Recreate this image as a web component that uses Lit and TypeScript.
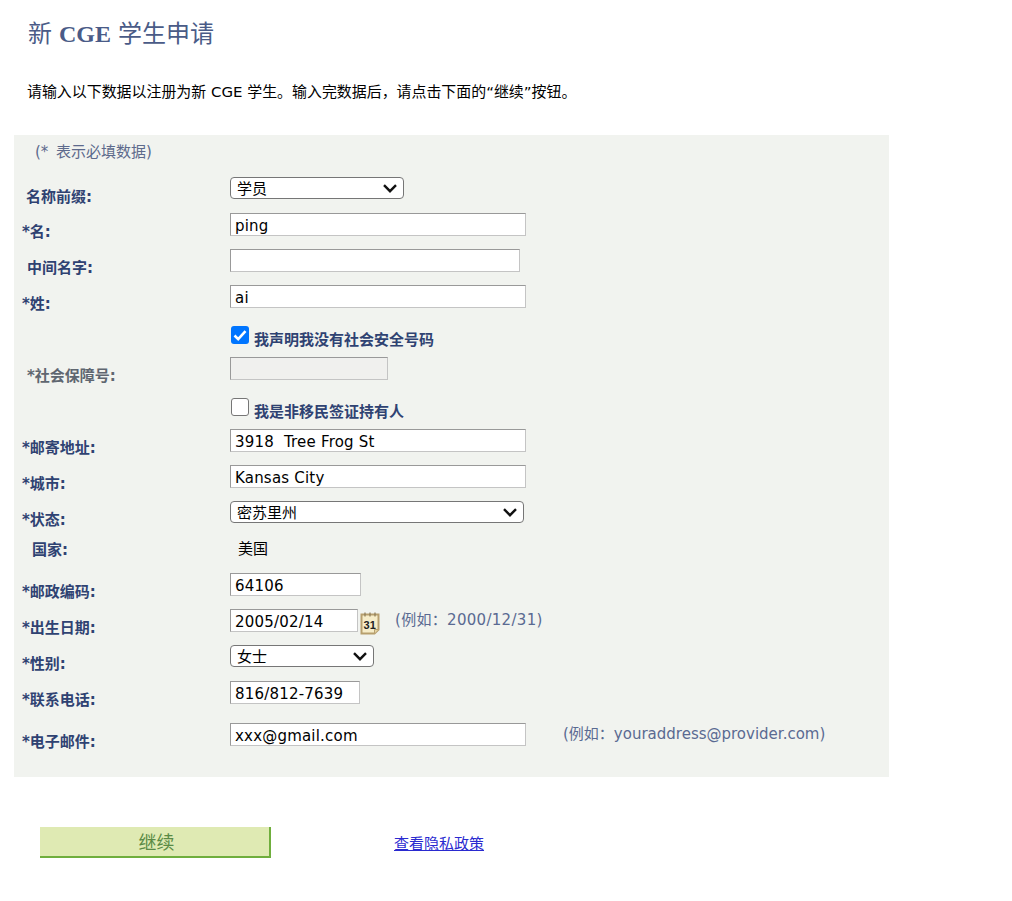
import { LitElement, html, css } from "lit";
import { customElement } from "lit/decorators.js";

@customElement("app-root")
export class AppRoot extends LitElement {
  static styles = css`
    :host {
      display: block;
      width: 1012px;
      height: 901px;
      background: #fff;
      font-family: "DejaVu Sans", "Noto Sans CJK SC", sans-serif;
      font-size: 15px;
      color: #000;
      box-sizing: border-box;
      padding-top: 19px;
      overflow: hidden;
    }
    h1 {
      margin: 0 0 0 28px;
      height: 31px;
      line-height: 31px;
      font-family: "Liberation Serif", "Noto Sans CJK SC", serif;
      font-size: 24px;
      font-weight: normal;
      color: #4a5b87;
      word-spacing: 1px;
    }
    h1 b { font-weight: bold; }
    .intro {
      margin: 31px 0 0 27px;
      height: 22px;
      line-height: 22px;
      font-size: 14.95px;
      white-space: pre;
    }
    .panel {
      margin: 32px 0 0 14px;
      width: 875px;
      height: 642px;
      background: #f1f3ef;
      box-sizing: border-box;
    }
    .note {
      height: 42px;
      padding: 7px 0 0 21px;
      box-sizing: border-box;
      line-height: 20px;
      font-size: 15px;
      color: #5d6a8c;
      word-spacing: 3px;
    }
    .row {
      display: grid;
      grid-template-columns: 216px 1fr;
      height: 36px;
    }
    .row.tall { height: 42px; }
    .label {
      display: flex;
      align-items: center;
      height: 35px;
      font-weight: bold;
      font-size: 15px;
      color: #2f4272;
      padding-left: 8px;
      box-sizing: border-box;
      white-space: pre;
    }
    .label.in13 { padding-left: 13px; }
    .label.in12 { padding-left: 12px; height: 37px; }
    .label.in18 { padding-left: 18px; height: 23px; }
    .label.muted { color: #5f6670; }
    .ctl { display: flex; align-items: flex-start; }
    input[type="text"] {
      box-sizing: border-box;
      height: 23px;
      margin: 0;
      padding: 2px 4px 0;
      border: 1px solid;
      border-color: #999 #c4c4c4 #c4c4c4 #999;
      background: #fff;
      font-family: "DejaVu Sans", sans-serif;
      font-size: 15px;
      letter-spacing: 0.2px;
      color: #000;
      border-radius: 0;
      outline: none;
    }
    input.w296 { width: 296px; }
    input.w290 { width: 290px; }
    input.w158 { width: 158px; }
    input.w131 { width: 131px; }
    input.w128 { width: 128px; }
    input.w130 { width: 130px; }
    input:disabled { background: #f0f0ee; }
    select {
      appearance: none;
      box-sizing: border-box;
      height: 22px;
      margin: 0;
      font-family: "Noto Sans CJK SC", sans-serif;
      font-size: 15px;
      line-height: 20px;
      padding: 0 6px;
      background-color: #fff;
      background-image: url("data:image/svg+xml,%3Csvg xmlns='http://www.w3.org/2000/svg' width='14' height='9' viewBox='0 0 14 9'%3E%3Cpath d='M1 1.2l6 6 6-6' fill='none' stroke='%23111' stroke-width='2.4'/%3E%3C/svg%3E");
      background-repeat: no-repeat;
      background-position: right 6px center;
      color: #000;
      border: 1px solid #767676;
      border-radius: 4px;
    }
    select.w174 { width: 174px; }
    select.w294 { width: 294px; }
    select.w144 { width: 144px; }
    .check {
      display: flex;
      align-items: flex-start;
      padding-top: 4px;
      font-weight: bold;
      font-size: 15px;
      color: #2f4272;
    }
    .check input {
      appearance: none;
      box-sizing: border-box;
      width: 18px;
      height: 18px;
      margin: 1px 5px 0 1px;
      background: #fff;
      border: 1.5px solid #767676;
      border-radius: 3px;
    }
    .check input:checked {
      border: 0;
      background-color: #0075ff;
      background-image: url("data:image/svg+xml,%3Csvg xmlns='http://www.w3.org/2000/svg' width='18' height='18' viewBox='0 0 18 18'%3E%3Cpath d='M3.5 9.5l3.7 3.7 7.3-8' fill='none' stroke='%23fff' stroke-width='2.6'/%3E%3C/svg%3E");
    }
    .check span { line-height: 20px; padding-top: 5px; }
    .country { padding: 0 0 0 8px; line-height: 24px; font-size: 15px; height: 24px; }
    .hint { font-size: 15px; color: #5a6a92; line-height: 20px; white-space: pre; padding-top: 1px; }
    .hint.date { margin-left: 15px; letter-spacing: 0.3px; }
    .hint.mail { margin: 0 0 0 37px; }
    .cal { display: block; margin: 3px 0 0 2px; flex: none; }
    .cal text { font-family: "Liberation Sans", sans-serif; font-size: 11px; font-weight: bold; fill: #222; }
    .actions {
      display: flex;
      align-items: center;
      margin: 50px 0 0 40px;
    }
    button {
      box-sizing: border-box;
      width: 231px;
      height: 31px;
      padding: 0 0 2px 4px;
      background: #dfeab3;
      border: 0;
      border-right: 2px solid #6fae3d;
      border-bottom: 2px solid #6fae3d;
      color: #5a8a45;
      font-family: "Noto Sans CJK SC", sans-serif;
      font-size: 18px;
    }
    a {
      margin: 0 0 0 123px;
      color: #2a2ad0;
      font-size: 15px;
      text-decoration: underline;
    }
  `;

  private label(text: string, cls = "") {
    return html`<div class="label ${cls}">${text}</div>`;
  }

  render() {
    return html`
      <h1>新 <b>CGE</b> 学生申请</h1>
      <p class="intro">请输入以下数据以注册为新 CGE 学生。输入完数据后\uFF0C请点击下面的“继续”按钮。</p>
      <section class="panel">
        <div class="note">(* 表示必填数据)</div>
        <div class="row">
          ${this.label("名称前缀:", "in12")}
          <div class="ctl"><select class="w174"><option>学员</option></select></div>
        </div>
        <div class="row">
          ${this.label("*名:")}
          <div class="ctl"><input type="text" class="w296" value="ping" /></div>
        </div>
        <div class="row">
          ${this.label("中间名字:", "in13")}
          <div class="ctl"><input type="text" class="w290" /></div>
        </div>
        <div class="row">
          ${this.label("*姓:")}
          <div class="ctl"><input type="text" class="w296" value="ai" /></div>
        </div>
        <div class="row">
          <div></div>
          <label class="check"><input type="checkbox" checked /><span>我声明我没有社会安全号码</span></label>
        </div>
        <div class="row">
          ${this.label("*社会保障号:", "in13 muted")}
          <div class="ctl"><input type="text" class="w158" disabled /></div>
        </div>
        <div class="row">
          <div></div>
          <label class="check"><input type="checkbox" /><span>我是非移民签证持有人</span></label>
        </div>
        <div class="row">
          ${this.label("*邮寄地址:")}
          <div class="ctl"><input type="text" class="w296" value="3918  Tree Frog St" /></div>
        </div>
        <div class="row">
          ${this.label("*城市:")}
          <div class="ctl"><input type="text" class="w296" value="Kansas City" /></div>
        </div>
        <div class="row">
          ${this.label("*状态:")}
          <div class="ctl"><select class="w294"><option>密苏里州</option></select></div>
        </div>
        <div class="row">
          ${this.label("国家:", "in18")}
          <div class="ctl"><div class="country">美国</div></div>
        </div>
        <div class="row">
          ${this.label("*邮政编码:")}
          <div class="ctl"><input type="text" class="w131" value="64106" /></div>
        </div>
        <div class="row">
          ${this.label("*出生日期:")}
          <div class="ctl">
            <input type="text" class="w128" value="2005/02/14" />
            <svg class="cal" width="20" height="23" viewBox="0 0 20 23">
              <path d="M1.5 2.5h17v15l-4 4h-13z" fill="#f6ecc8" stroke="#b79f6e" stroke-width="2" />
              <path d="M14.5 21.5v-4h4" fill="#e3d3a3" stroke="#b79f6e" />
              <path d="M5 0.5v4M10 0.5v4M15 0.5v4" stroke="#8a7a55" stroke-width="1.2" />
              <text x="3.6" y="16.5">31</text>
            </svg>
            <span class="hint date">(例如\uFF1A2000/12/31)</span>
          </div>
        </div>
        <div class="row">
          ${this.label("*性别:")}
          <div class="ctl"><select class="w144"><option>女士</option></select></div>
        </div>
        <div class="row tall">
          ${this.label("*联系电话:")}
          <div class="ctl"><input type="text" class="w130" value="816/812-7639" /></div>
        </div>
        <div class="row">
          ${this.label("*电子邮件:")}
          <div class="ctl">
            <input type="text" class="w296" value="xxx@gmail.com" />
            <span class="hint mail">(例如\uFF1Ayouraddress@provider.com)</span>
          </div>
        </div>
      </section>
      <div class="actions">
        <button type="button">继续</button>
        <a href="#">查看隐私政策</a>
      </div>
    `;
  }
}
